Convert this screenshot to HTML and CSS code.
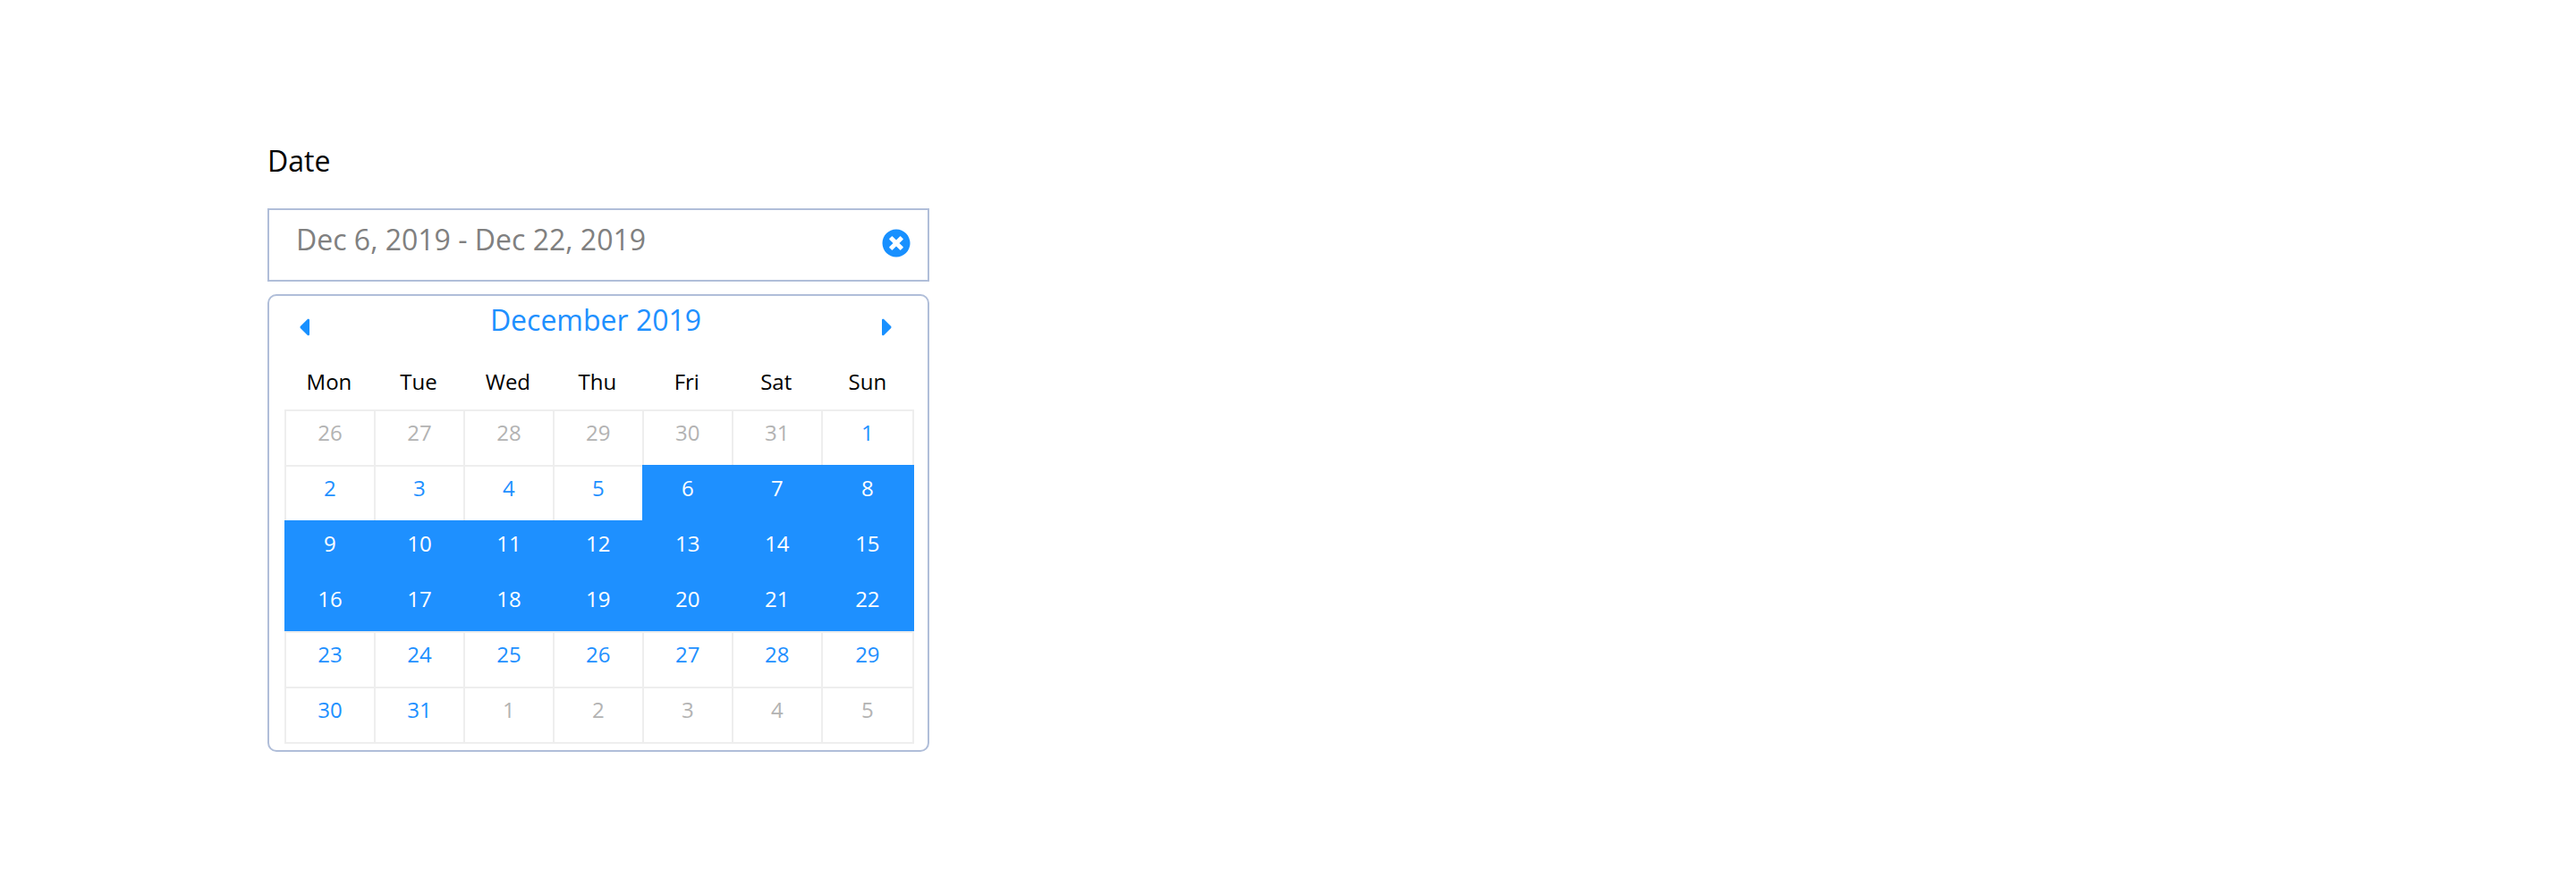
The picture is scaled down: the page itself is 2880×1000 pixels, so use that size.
FILE: index.html
```html
<!DOCTYPE html>
<html lang="en">
<head>
    <meta charset="UTF-8">
    <meta name="viewport" content="width=device-width, initial-scale=1.0">
    <title>Date range picker</title>
    <link rel="stylesheet" href="styles.css">
</head>
<body>
    <div class="date-picker">
        <label class="date-label" for="dateRange">Date</label>
        <div class="date-field">
            <input type="text" id="dateRange" class="date-input" value="Dec 6, 2019 - Dec 22, 2019" readonly>
            <button type="button" class="clear-btn" aria-label="Clear">
                <svg viewBox="0 0 512 512"><path d="M256 8C119 8 8 119 8 256s111 248 248 248 248-111 248-248S393 8 256 8zm121.6 313.1c4.7 4.7 4.7 12.3 0 17L338 377.6c-4.7 4.7-12.3 4.7-17 0L256 312l-65.1 65.6c-4.7 4.7-12.3 4.7-17 0L134.4 338c-4.7-4.7-4.7-12.3 0-17l65.6-65-65.6-65.1c-4.7-4.7-4.7-12.3 0-17l39.6-39.6c4.7-4.7 12.3-4.7 17 0l65 65.7 65.1-65.6c4.7-4.7 12.3-4.7 17 0l39.6 39.6c4.7 4.7 4.7 12.3 0 17L312 256l65.6 65.1z"/></svg>
            </button>
        </div>
        <div class="calendar">
            <div class="calendar-header">
                <button type="button" class="nav-btn" aria-label="Previous month">
                    <svg viewBox="0 0 192 512"><path d="M192 127.338v257.324c0 17.818-21.543 26.741-34.142 14.142L29.196 270.142c-7.81-7.81-7.81-20.474 0-28.284l128.662-128.662c12.599-12.6 34.142-3.676 34.142 14.142z"/></svg>
                </button>
                <div class="calendar-title" id="calendarTitle">December 2019</div>
                <button type="button" class="nav-btn" aria-label="Next month">
                    <svg viewBox="0 0 192 512"><path d="M0 384.662V127.338c0-17.818 21.543-26.741 34.142-14.142l128.662 128.662c7.81 7.81 7.81 20.474 0 28.284L34.142 398.804C21.543 411.404 0 402.48 0 384.662z"/></svg>
                </button>
            </div>
            <table class="calendar-table" aria-labelledby="calendarTitle">
                <thead>
                    <tr>
                        <th>Mon</th>
                        <th>Tue</th>
                        <th>Wed</th>
                        <th>Thu</th>
                        <th>Fri</th>
                        <th>Sat</th>
                        <th>Sun</th>
                    </tr>
                </thead>
                <tbody>
                    <tr>
                        <td class="outside"><button type="button">26</button></td>
                        <td class="outside"><button type="button">27</button></td>
                        <td class="outside"><button type="button">28</button></td>
                        <td class="outside"><button type="button">29</button></td>
                        <td class="outside"><button type="button">30</button></td>
                        <td class="outside"><button type="button">31</button></td>
                        <td><button type="button">1</button></td>
                    </tr>
                    <tr>
                        <td><button type="button">2</button></td>
                        <td><button type="button">3</button></td>
                        <td><button type="button">4</button></td>
                        <td><button type="button">5</button></td>
                        <td class="selected"><button type="button">6</button></td>
                        <td class="selected"><button type="button">7</button></td>
                        <td class="selected"><button type="button">8</button></td>
                    </tr>
                    <tr>
                        <td class="selected"><button type="button">9</button></td>
                        <td class="selected"><button type="button">10</button></td>
                        <td class="selected"><button type="button">11</button></td>
                        <td class="selected"><button type="button">12</button></td>
                        <td class="selected"><button type="button">13</button></td>
                        <td class="selected"><button type="button">14</button></td>
                        <td class="selected"><button type="button">15</button></td>
                    </tr>
                    <tr>
                        <td class="selected"><button type="button">16</button></td>
                        <td class="selected"><button type="button">17</button></td>
                        <td class="selected"><button type="button">18</button></td>
                        <td class="selected"><button type="button">19</button></td>
                        <td class="selected"><button type="button">20</button></td>
                        <td class="selected"><button type="button">21</button></td>
                        <td class="selected"><button type="button">22</button></td>
                    </tr>
                    <tr>
                        <td><button type="button">23</button></td>
                        <td><button type="button">24</button></td>
                        <td><button type="button">25</button></td>
                        <td><button type="button">26</button></td>
                        <td><button type="button">27</button></td>
                        <td><button type="button">28</button></td>
                        <td><button type="button">29</button></td>
                    </tr>
                    <tr>
                        <td><button type="button">30</button></td>
                        <td><button type="button">31</button></td>
                        <td class="outside"><button type="button">1</button></td>
                        <td class="outside"><button type="button">2</button></td>
                        <td class="outside"><button type="button">3</button></td>
                        <td class="outside"><button type="button">4</button></td>
                        <td class="outside"><button type="button">5</button></td>
                    </tr>
                </tbody>
            </table>
        </div>
    </div>
</body>
</html>
```
FILE: styles.css
```css
* {
    box-sizing: border-box;
}
body {
    font-family: 'Open Sans', 'Noto Sans', sans-serif;
    font-size: 32px;
    line-height: 44px;
    background: #fff;
    color: #000;
    margin: 0;
    padding: 158px 299px;
}
button {
    display: block;
    margin: 0;
    padding: 0;
    border: none;
    background: none;
    font: inherit;
    color: inherit;
    cursor: pointer;
}
svg {
    display: block;
    height: 32px;
    fill: #1890ff;
}
.date-picker {
    width: 100%;
    max-width: 740px;
}
.date-label {
    display: block;
    margin-bottom: 31px;
}
.date-field {
    position: relative;
    margin-bottom: 14px;
}
.date-input {
    display: block;
    width: 100%;
    margin: 0;
    padding: 11px 70px 23px 30px;
    border: 2px solid #b0bed9;
    border-radius: 0;
    background: #fff;
    font: inherit;
    color: #808080;
    outline: none;
}
/* sits over the right end of the input */
.clear-btn {
    position: absolute;
    top: 23px;
    right: 21px;
}
.calendar {
    padding: 5px 15px 7px 17px;
    border: 2px solid #b0bed9;
    border-radius: 10px;
}
.calendar-header {
    display: flex;
    justify-content: space-between;
    align-items: flex-end;
    padding: 0 24px 0 16px;
}
.calendar-title {
    padding-bottom: 2px;
    color: #1e90ff;
}
.calendar-table {
    width: 100%;
    table-layout: fixed;
    border-spacing: 0;
    font-size: 24px;
    line-height: 33px;
    text-align: center;
}
.calendar-table th {
    padding: 28px 0 15px;
    font-weight: normal;
}
.calendar-table th:not(:last-child) {
    width: 14.2%;
}
.calendar-table td {
    padding: 0;
    border: 0 solid #eee;
    border-width: 2px 0 0 2px;
    color: #1e90ff;
}
.calendar-table td:last-child {
    border-right-width: 2px;
}
.calendar-table tr:last-child td {
    border-bottom-width: 2px;
}
.calendar-table td button {
    width: 100%;
    padding: 7px 0 20px;
}
.calendar-table td.outside {
    color: #b3b3b3;
}
.calendar-table td.selected {
    background: #1e90ff;
    border-color: #1e90ff;
    color: #fff;
}
```
